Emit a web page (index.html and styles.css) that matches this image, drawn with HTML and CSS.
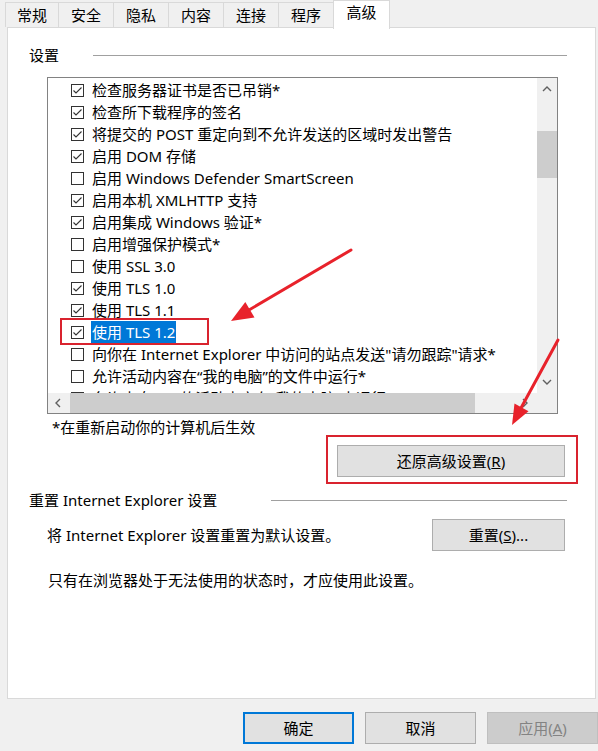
FILE: index.html
```html
<!DOCTYPE html>
<html lang="zh-CN">
<head>
<meta charset="utf-8">
<title>Internet 选项 - 高级</title>
<link rel="stylesheet" href="styles.css">
</head>
<body>
<div class="dialog">
  <div class="tabs">
    <div class="tab first">常规</div>
    <div class="tab">安全</div>
    <div class="tab">隐私</div>
    <div class="tab">内容</div>
    <div class="tab">连接</div>
    <div class="tab">程序</div>
    <div class="tab active">高级</div>
  </div>

  <div class="panel">
    <div class="group-head first-group"><span class="group-title">设置</span><span class="rule"></span></div>

    <div class="listbox">
      <div class="list-main">
        <div class="list-content">
          <div class="row"><span class="cb"><svg viewBox="0 0 11 11"><polyline points="1.5,5.5 4,8 9.5,2.5"/></svg></span><span class="label">检查服务器证书是否已吊销*</span></div>
          <div class="row"><span class="cb"><svg viewBox="0 0 11 11"><polyline points="1.5,5.5 4,8 9.5,2.5"/></svg></span><span class="label">检查所下载程序的签名</span></div>
          <div class="row"><span class="cb"><svg viewBox="0 0 11 11"><polyline points="1.5,5.5 4,8 9.5,2.5"/></svg></span><span class="label">将提交的 POST 重定向到不允许发送的区域时发出警告</span></div>
          <div class="row"><span class="cb"><svg viewBox="0 0 11 11"><polyline points="1.5,5.5 4,8 9.5,2.5"/></svg></span><span class="label">启用 DOM 存储</span></div>
          <div class="row"><span class="cb"></span><span class="label">启用 Windows Defender SmartScreen</span></div>
          <div class="row"><span class="cb"><svg viewBox="0 0 11 11"><polyline points="1.5,5.5 4,8 9.5,2.5"/></svg></span><span class="label">启用本机 XMLHTTP 支持</span></div>
          <div class="row"><span class="cb"><svg viewBox="0 0 11 11"><polyline points="1.5,5.5 4,8 9.5,2.5"/></svg></span><span class="label">启用集成 Windows 验证*</span></div>
          <div class="row"><span class="cb"></span><span class="label">启用增强保护模式*</span></div>
          <div class="row"><span class="cb"></span><span class="label">使用 SSL 3.0</span></div>
          <div class="row"><span class="cb"><svg viewBox="0 0 11 11"><polyline points="1.5,5.5 4,8 9.5,2.5"/></svg></span><span class="label">使用 TLS 1.0</span></div>
          <div class="row"><span class="cb"><svg viewBox="0 0 11 11"><polyline points="1.5,5.5 4,8 9.5,2.5"/></svg></span><span class="label">使用 TLS 1.1</span></div>
          <div class="row"><span class="cb"><svg viewBox="0 0 11 11"><polyline points="1.5,5.5 4,8 9.5,2.5"/></svg></span><span class="label selected">使用 TLS 1.2</span></div>
          <div class="row"><span class="cb"></span><span class="label">向你在 Internet Explorer 中访问的站点发送"请勿跟踪"请求*</span></div>
          <div class="row"><span class="cb"></span><span class="label">允许活动内容在“我的电脑”的文件中运行*</span></div>
          <div class="row"><span class="cb"></span><span class="label">允许来自 CD 的活动内容在“我的电脑”中运行*</span></div>
        </div>
        <div class="vscroll">
          <div class="sbtn"><svg viewBox="0 0 10 6"><polyline points="1,5 5,1 9,5"/></svg></div>
          <div class="vtrack"><div class="vthumb"></div></div>
          <div class="sbtn"><svg viewBox="0 0 10 6"><polyline points="1,1 5,5 9,1"/></svg></div>
        </div>
      </div>
      <div class="list-foot">
        <div class="hscroll">
          <div class="hbtn"><svg viewBox="0 0 6 10"><polyline points="5,1 1,5 5,9"/></svg></div>
          <div class="hthumb"></div>
          <div class="hbtn end"><svg viewBox="0 0 6 10"><polyline points="1,1 5,5 1,9"/></svg></div>
        </div>
        <div class="corner"></div>
      </div>
    </div>

    <div class="note">*在重新启动你的计算机后生效</div>
    <button class="btn restore">还原高级设置(<u>R</u>)</button>

    <div class="group-head second-group"><span class="group-title">重置 Internet Explorer 设置</span><span class="rule"></span></div>
    <div class="reset-row">
      <span>将 Internet Explorer 设置重置为默认设置。</span>
      <button class="btn reset">重置(<u>S</u>)...</button>
    </div>
    <div class="hint">只有在浏览器处于无法使用的状态时，才应使用此设置。</div>
  </div>

  <div class="actions">
    <button class="btn primary">确定</button>
    <button class="btn">取消</button>
    <button class="btn disabled">应用(<u>A</u>)</button>
  </div>
</div>

<svg class="annot" viewBox="0 0 598 751">
  <rect class="mark" x="61" y="319" width="147" height="25"/>
  <rect class="mark" x="327" y="436" width="250" height="47"/>
  <line class="arrow-line" x1="351" y1="250" x2="249" y2="310"/>
  <polygon class="arrow-head" points="231,321 254.5,317.5 245.3,302.1"/>
  <line class="arrow-line" x1="558" y1="340" x2="521" y2="408"/>
  <polygon class="arrow-head" points="512,425 528.5,411.2 514.5,403.6"/>
</svg>
</body>
</html>
```

FILE: styles.css
```css
* {
  box-sizing: border-box;
}

html,
body {
  margin: 0;
  padding: 0;
}

body {
  width: 598px;
  height: 751px;
  position: relative;
  overflow: hidden;
  background: #f0f0f0;
  color: #000;
  font-family: "Noto Sans", "Noto Sans CJK SC", sans-serif;
  font-size: 15px;
}

/* ---------- tabs ---------- */
.tabs {
  display: flex;
  align-items: flex-end;
  height: 27px;
  padding-left: 5px;
}

.tab {
  width: 56px;
  height: 25px;
  margin-left: -1px;
  padding-top: 2px;
  border: 1px solid #d9d9d9;
  border-bottom: none;
  background: #f0f0f0;
  text-align: center;
  line-height: 20px;
}

.tab.first {
  width: 54px;
  margin-left: 0;
}

.tab.active {
  width: 57px;
  height: 29px;
  margin-bottom: -2px;
  padding-top: 1px;
  background: #fff;
  position: relative;
  z-index: 1;
}

/* ---------- panel ---------- */
.panel {
  width: 589px;
  height: 672px;
  margin-left: 7px;
  border: 1px solid #d9d9d9;
  background: #fff;
  display: flex;
  flex-direction: column;
}

.group-head {
  display: flex;
  align-items: center;
  height: 22px;
  padding-left: 21px;
  line-height: 22px;
  white-space: nowrap;
}

.first-group {
  margin-top: 16px;
}

.rule {
  height: 1px;
  background: #a0a0a0;
}

.first-group .rule {
  flex: 1;
  margin: 0 28px 0 34px;
}

.second-group {
  margin-top: 12px;
}

.second-group .rule {
  width: 296px;
  margin-left: auto;
  margin-right: 28px;
}

/* ---------- list box ---------- */
.listbox {
  width: 511px;
  height: 337px;
  margin: 11px 0 0 39px;
  border: 1px solid #828282;
  background: #fff;
  display: flex;
  flex-direction: column;
}

.list-main {
  display: flex;
  height: 315px;
  flex: none;
}

.list-content {
  flex: 1;
  min-width: 0;
  height: 315px;
  overflow: hidden;
  padding-top: 1px;
}

.row {
  display: flex;
  align-items: center;
  height: 22px;
  padding-left: 23px;
  white-space: nowrap;
}

.cb {
  flex: none;
  width: 13px;
  height: 13px;
  margin-right: 7px;
  border: 1px solid #333;
  background: #fff;
  display: flex;
}

.cb svg {
  width: 11px;
  height: 11px;
}

.cb polyline {
  fill: none;
  stroke: #333;
  stroke-width: 1.1;
}

.label {
  padding: 0 1px;
  line-height: 22px;
}

.label.selected {
  background: #0078d7;
  color: #fff;
}

.vscroll {
  flex: none;
  width: 20px;
  background: #f0f0f0;
  display: flex;
  flex-direction: column;
}

.sbtn {
  height: 22px;
  display: flex;
  align-items: center;
  justify-content: center;
}

.sbtn svg {
  width: 10px;
  height: 6px;
}

.hbtn svg {
  width: 6px;
  height: 10px;
}

.sbtn polyline,
.hbtn polyline {
  fill: none;
  stroke: #606060;
  stroke-width: 1.4;
}

.vtrack {
  flex: 1;
  padding-top: 31px;
}

.vthumb {
  height: 47px;
  background: #cdcdcd;
}

.list-foot {
  display: flex;
  height: 20px;
  flex: none;
  background: #f0f0f0;
}

.hscroll {
  flex: 1;
  display: flex;
}

.hbtn {
  width: 20px;
  display: flex;
  align-items: center;
  justify-content: center;
}

.hbtn.end {
  margin-left: auto;
  margin-right: 2px;
}

.hthumb {
  width: 405px;
  margin-left: 2px;
  background: #cdcdcd;
}

.corner {
  width: 20px;
}

/* ---------- texts & buttons ---------- */
.note {
  margin: 3px 0 0 44px;
  line-height: 20px;
}

.btn {
  height: 32px;
  padding: 0;
  border: 1px solid #adadad;
  background: #e1e1e1;
  color: #000;
  font: inherit;
  line-height: 28px;
  text-align: center;
}

.restore {
  align-self: flex-end;
  width: 228px;
  margin: 8px 30px 0 0;
}

.reset-row {
  display: flex;
  align-items: center;
  justify-content: space-between;
  margin-top: 8px;
  padding: 0 30px 0 39px;
  line-height: 22px;
}

.reset {
  width: 133px;
}

.hint {
  margin-top: 18px;
  padding-left: 40px;
  line-height: 22px;
}

.actions {
  display: flex;
  justify-content: flex-end;
  gap: 11px;
  margin-top: 13px;
}

.actions .btn {
  width: 111px;
}

.btn.primary {
  border: 2px solid #0078d7;
}

.btn.disabled {
  background: #cccccc;
  border-color: #bfbfbf;
  color: #838383;
}

/* ---------- annotations ---------- */
.annot {
  position: absolute;
  left: 0;
  top: 0;
  width: 598px;
  height: 751px;
  pointer-events: none;
  z-index: 5;
}

.mark {
  fill: none;
  stroke: #d9232e;
  stroke-width: 2;
}

.arrow-line {
  stroke: #e8222b;
  stroke-width: 3;
  stroke-linecap: round;
}

.arrow-head {
  fill: #e8222b;
}
```
